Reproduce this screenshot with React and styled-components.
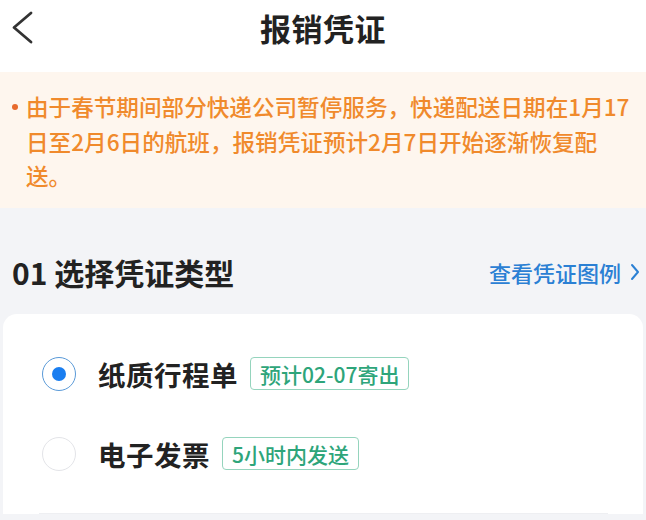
import React, { useState } from "react";
import styled, { createGlobalStyle } from "styled-components";

const Global = createGlobalStyle`
  html, body { margin: 0; padding: 0; }
  body {
    background: #f3f4f7;
    font-family: "Noto Sans CJK SC", "Noto Sans", sans-serif;
    -webkit-font-smoothing: antialiased;
  }
  * { box-sizing: border-box; }
`;

const Page = styled.div`
  width: 646px;
  min-height: 520px;
  background: #f3f4f7;
  overflow: hidden;
`;

const Header = styled.header`
  height: 72px;
  background: #ffffff;
  display: grid;
  grid-template-columns: 64px 1fr 64px;
  align-items: center;
`;

const BackButton = styled.button`
  border: 0;
  background: transparent;
  padding: 0;
  width: 48px;
  height: 56px;
  display: flex;
  align-items: center;
  justify-content: flex-start;
  padding-left: 10px;
  margin-top: -16px;
  cursor: pointer;
`;

const Title = styled.h1`
  margin: 0;
  margin-top: -18px;
  text-align: center;
  font-size: 31px;
  font-weight: 700;
  color: #222;
  letter-spacing: 0.5px;
`;

const Notice = styled.div`
  background: #fef6ee;
  padding: 18px 8px 14px 12px;
  display: flex;
  gap: 8px;
`;

const Bullet = styled.span`
  flex: none;
  width: 6px;
  height: 6px;
  border-radius: 50%;
  background: #e86a2c;
  margin-top: 14px;
`;

const NoticeText = styled.p`
  margin: 0;
  font-size: 22.6px;
  line-height: 34.5px;
  color: #f08a2c;
  font-weight: 500;
  width: 608px;
`;

const SectionHead = styled.div`
  display: flex;
  align-items: center;
  justify-content: space-between;
  padding: 48px 6px 26px 12px;
  height: 106px;
`;

const SectionTitle = styled.h2`
  margin: 0;
  font-size: 30px;
  line-height: 32px;
  font-weight: 700;
  color: #222;
`;

const Link = styled.a`
  display: flex;
  align-items: center;
  gap: 9px;
  font-size: 22px;
  color: #2b80d4;
  text-decoration: none;
  font-weight: 500;
`;

const Card = styled.div`
  margin: 0 3px;
  background: #ffffff;
  border-radius: 14px 14px 0 0;
  padding-top: 20px;
`;

const Option = styled.label`
  display: flex;
  align-items: center;
  height: 80px;
  padding-left: 39px;
  cursor: pointer;
`;

const Radio = styled.span`
  flex: none;
  width: 34px;
  height: 34px;
  border-radius: 50%;
  border: 1.5px solid ${(p) => (p.$checked ? "#5a9ad8" : "#e3e4e8")};
  display: flex;
  align-items: center;
  justify-content: center;
  margin-right: 22px;

  &::after {
    content: "";
    width: 14px;
    height: 14px;
    border-radius: 50%;
    background: ${(p) => (p.$checked ? "#1a7ef0" : "transparent")};
  }
`;

const OptionName = styled.span`
  font-size: 27.5px;
  font-weight: 700;
  color: #222;
  letter-spacing: 0.5px;
  margin-right: 12px;
`;

const Tag = styled.span`
  display: inline-flex;
  align-items: center;
  height: 33px;
  padding: 0 9px;
  border: 1.5px solid #95d4bd;
  border-radius: 4px;
  font-size: 21px;
  color: #2ea57a;
  font-weight: 500;
`;

const Divider = styled.div`
  height: 1px;
  background: #eeeff2;
  margin: 19px 35px 0 36px;
`;

const options = [
  { id: "paper", name: "纸质行程单", tag: "预计02-07寄出" },
  { id: "einvoice", name: "电子发票", tag: "5小时内发送" },
];

export default function App() {
  const [selected, setSelected] = useState("paper");
  return (
    <Page>
      <Global />
      <Header>
        <BackButton aria-label="返回">
          <svg width="24" height="34" viewBox="0 0 24 34" fill="none">
            <polyline
              points="21,2 4,16.5 21,31"
              stroke="#333"
              strokeWidth="2.8"
              strokeLinecap="round"
              strokeLinejoin="round"
            />
          </svg>
        </BackButton>
        <Title>报销凭证</Title>
        <span />
      </Header>
      <Notice>
        <Bullet />
        <NoticeText>
          由于春节期间部分快递公司暂停服务，快递配送日期在1月17日至2月6日的航班，报销凭证预计2月7日开始逐渐恢复配送。
        </NoticeText>
      </Notice>
      <SectionHead>
        <SectionTitle>01 选择凭证类型</SectionTitle>
        <Link href="#">
          查看凭证图例
          <svg width="10" height="18" viewBox="0 0 10 18" fill="none">
            <polyline
              points="2,2 8,9 2,16"
              stroke="#2b80d4"
              strokeWidth="2"
              strokeLinecap="round"
              strokeLinejoin="round"
            />
          </svg>
        </Link>
      </SectionHead>
      <Card>
        {options.map((o) => (
          <Option key={o.id} onClick={() => setSelected(o.id)}>
            <Radio $checked={selected === o.id} />
            <OptionName>{o.name}</OptionName>
            <Tag>{o.tag}</Tag>
          </Option>
        ))}
        <Divider />
      </Card>
    </Page>
  );
}
